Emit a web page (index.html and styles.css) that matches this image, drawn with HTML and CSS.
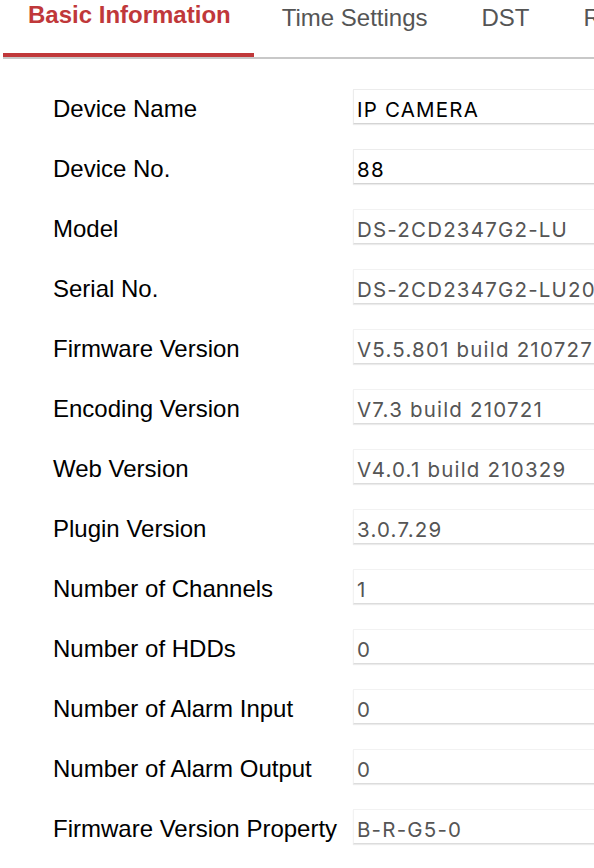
FILE: index.html
```html
<!DOCTYPE html>
<html>
<head>
<meta charset="utf-8">
<link rel="stylesheet" href="styles.css">
</head>
<body>
<div class="page">
  <div class="tabs">
    <div class="tab active">Basic Information</div>
    <div class="tab">Time Settings</div>
    <div class="tab">DST</div>
    <div class="tab">RS-232</div>
  </div>
  <div class="form">
    <div class="row"><div class="label">Device Name</div><input class="field" value="IP CAMERA"></div>
    <div class="row"><div class="label">Device No.</div><input class="field" value="88"></div>
    <div class="row"><div class="label">Model</div><input class="field ro" readonly value="DS-2CD2347G2-LU"></div>
    <div class="row"><div class="label">Serial No.</div><input class="field ro" readonly value="DS-2CD2347G2-LU20210101AAWRG12345678"></div>
    <div class="row"><div class="label">Firmware Version</div><input class="field ro" readonly value="V5.5.801 build 210727"></div>
    <div class="row"><div class="label">Encoding Version</div><input class="field ro" readonly value="V7.3 build 210721"></div>
    <div class="row"><div class="label">Web Version</div><input class="field ro" readonly value="V4.0.1 build 210329"></div>
    <div class="row"><div class="label">Plugin Version</div><input class="field ro" readonly value="3.0.7.29"></div>
    <div class="row"><div class="label">Number of Channels</div><input class="field ro" readonly value="1"></div>
    <div class="row"><div class="label">Number of HDDs</div><input class="field ro" readonly value="0"></div>
    <div class="row"><div class="label">Number of Alarm Input</div><input class="field ro" readonly value="0"></div>
    <div class="row"><div class="label">Number of Alarm Output</div><input class="field ro" readonly value="0"></div>
    <div class="row"><div class="label">Firmware Version Property</div><input class="field ro" readonly value="B-R-G5-0"></div>
  </div>
</div>
</body>
</html>
```
FILE: styles.css
```css
html, body {
  margin: 0;
  padding: 0;
  background: #fff;
  overflow: hidden;
}
.page {
  width: 594px;
  height: 868px;
  overflow: hidden;
  font-family: "Liberation Sans", Arial, sans-serif;
}
.tabs {
  display: flex;
  margin-left: 3px;
  border-bottom: 2px solid #c8c8c8;
  height: 57px;
  white-space: nowrap;
}
.tab {
  flex: none;
  height: 50px;
  line-height: 30px;
  padding: 3px 26px 0 28px;
  font-size: 24px;
  color: #555;
  box-sizing: content-box;
}
.tab.active {
  height: 53px;
  padding: 0 23px 0 25px;
  color: #c0383a;
  font-weight: bold;
  border-bottom: 4px solid #c0383a;
}
.form {
  padding-top: 20px;
}
.row {
  display: flex;
  height: 60px;
  align-items: flex-start;
}
.label {
  width: 300px;
  padding-left: 53px;
  line-height: 60px;
  font-size: 24px;
  color: #000;
  white-space: nowrap;
  flex: none;
}
.field {
  flex: none;
  margin-top: 10px;
  width: 280px;
  height: 35px;
  box-sizing: border-box;
  border: 1px solid #ececec;
  border-bottom-color: #d4d4d4;
  box-shadow: 0 1px 1px rgba(0,0,0,0.08);
  padding: 5px 3px 0 3px;
  font-family: Inter, "Liberation Sans", sans-serif;
  font-size: 20.5px;
  letter-spacing: 1.2px;
  line-height: 24px;
  color: #000;
  background: #fff;
  outline: none;
}
.field.ro {
  color: #555;
  border-color: #f2f2f2;
  border-bottom-color: #dcdcdc;
}
```
